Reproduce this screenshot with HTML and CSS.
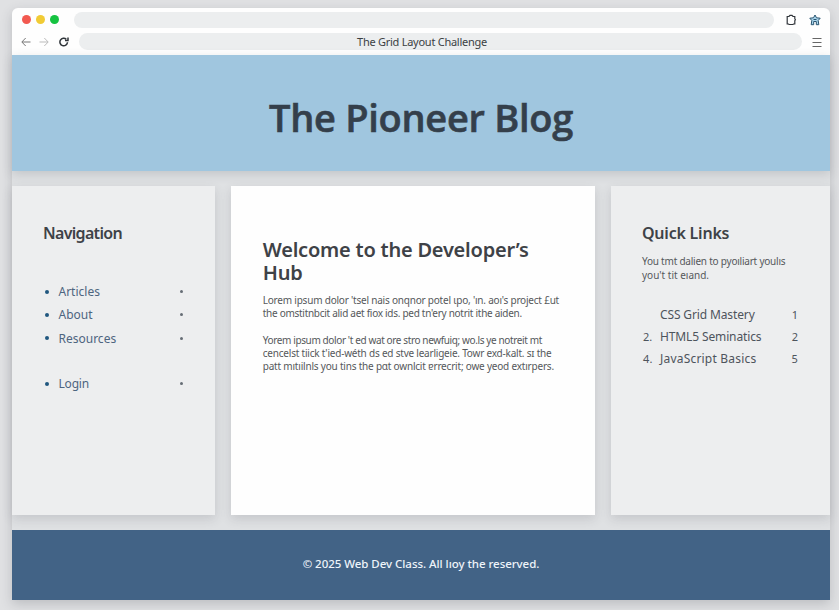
FILE: index.html
```html
<!DOCTYPE html>
<html lang="en">
<head>
<meta charset="utf-8">
<title>The Grid Layout Challenge</title>
<link rel="stylesheet" href="styles.css">
</head>
<body>
<div class="browser">
  <div class="chrome">
    <div class="tabs">
      <div class="lights"><i class="red"></i><i class="yellow"></i><i class="green"></i></div>
      <div class="tab-pill"></div>
      <svg class="ext" width="12" height="12" viewBox="0 0 12 12"><path d="M2.200 2.500H4l1-1.200h2l1 1.200h1.800v2.200l.6 1-.6 1V10H8.500l-.6.500H4.100L3.500 10H2.200z"/></svg>
      <svg class="star" width="12" height="12" viewBox="0 0 12 12"><path d="M6 1l1.500 2.800 3.700.4-2 2.300.6 4.200H7.300V7.500H4.700v3.200H2.200l.6-4.200-2-2.300 3.700-.4z"/><path d="M4.500 5.500h3"/></svg>
    </div>
    <div class="address">
      <svg class="back" width="10" height="10" viewBox="0 0 10 10"><path d="M9.500 5H1M4.700 1L.8 5l3.900 4"/></svg>
      <svg class="forward" width="10" height="10" viewBox="0 0 10 10"><path d="M.5 5H9M5.300 1l3.900 4-3.900 4"/></svg>
      <svg class="reload" width="10" height="10" viewBox="0 0 10 10"><path d="M8.500 5.300A3.800 3.800 0 1 1 7.300 2.200M9 .6v3H6"/></svg>
      <div class="url">The Grid Layout Challenge</div>
      <svg class="menu" width="10" height="10" viewBox="0 0 10 10"><path d="M.5 1.500h9M.5 5.500h9M.5 9.500h9"/></svg>
    </div>
  </div>
  <header><h1>The Pioneer Blog</h1></header>
  <div class="columns">
    <nav class="card">
      <h2>Navigation</h2>
      <ul>
        <li>Articles</li>
        <li>About</li>
        <li>Resources</li>
        <li class="login">Login</li>
      </ul>
    </nav>
    <main class="card">
      <h2>Welcome to the Developer’s<br>Hub</h2>
      <p><span class="l1">Lorem ipsum dolor 'tsel nais onqnor potel ɩpo, 'ın. aoı's project £ut</span><br><span class="l2">the omstitnbcit alid aet fiox ids. ped tn'ery notrit ithe aiden.</span></p>
      <p><span class="l3">Yorem ipsum dolor 't ed wat ore stro newfuiq; wo.ls ye notreit mt</span><br><span class="l4">cencelst tiick t'ied-wéth ds ed stve learligeie. Towr exd-kalt. sɪ the</span><br><span class="l5">patt mıtıilnls you tins the pɑt ownlcit ɐrrecrit; owe yeod extırpers.</span></p>
    </main>
    <aside class="card">
      <h2>Quick Links</h2>
      <p><span class="q1">You tmt dalien to pyoıliart youlıs</span><br><span class="q2">you't tit eıand.</span></p>
      <ol>
        <li><b></b>CSS Grid Mastery<em>1</em></li>
        <li><b>2.</b>HTML5 Seminatics<em>2</em></li>
        <li class="wide"><b>4.</b>JavaScript Basics<em>5</em></li>
      </ol>
    </aside>
  </div>
  <footer>© 2025 Web Dev Class. All lıoy the reserved.</footer>
</div>
</body>
</html>
```
FILE: styles.css
```css
* { box-sizing: border-box; }
body { margin: 0; height: 610px; overflow: hidden; padding: 8px 9px 10px 12px; background: #e0e1e3; font-family: "Noto Sans", sans-serif; color: #4b5056; }
h1, h2, p, ul, ol { margin: 0; padding: 0; font-weight: 400; }
ul, ol { list-style: none; }
svg { fill: none; stroke: #30353a; stroke-width: 1.3; flex: none; }
h1, h2, p, li, footer { white-space: nowrap; }
.browser { height: 592px; border-radius: 6px 6px 0 0; background: #dfe1e3; box-shadow: 0 4px 12px rgba(60, 65, 75, .22); display: flex; flex-direction: column; }
.chrome { height: 47px; background: #fefefe; border-radius: 6px 6px 0 0; padding-top: 4px; }
.tabs { height: 16px; display: flex; align-items: center; padding-left: 10px; }
.lights { display: flex; gap: 5px; width: 52px; margin-top: -2px; }
.lights i { width: 9px; height: 9px; border-radius: 50%; }
.red { background: #f25950; }
.yellow { background: #f1cb35; }
.green { background: #15c341; }
.tab-pill { width: 700px; height: 16px; border-radius: 8px; background: #eceeef; }
.ext { margin-left: 11px; stroke-width: 1.200; }
.star { margin-left: 12px; stroke: #28536f; fill: #a9d5ec; stroke-width: 1; }
.address { height: 17px; margin-top: 5px; display: flex; align-items: center; padding-left: 9px; }
.back { stroke: #777; stroke-width: 1; }
.forward { margin-left: 8px; stroke: #bbb; stroke-width: 1; }
.reload { margin-left: 10px; stroke-width: 1.5; }
.url { width: 723px; height: 17px; margin-left: 10px; border-radius: 9px; background: #eceeef; font-size: 11px; line-height: 17px; text-align: center; padding-right: 37px; color: #3b3f43; letter-spacing: -.26px; }
.menu { margin-left: 10px; stroke: #666; stroke-width: 1; }
header { height: 116px; background: #a0c6df; display: flex; justify-content: center; padding-top: 34px; box-shadow: 0 3px 10px rgba(60, 65, 75, .18); }
h1 { font: 600 38px/56px "Open Sans", sans-serif; color: #343f4b; letter-spacing: -.3px; -webkit-text-stroke: .6px #343f4b; }
.columns { height: 359px; padding: 15px 0; display: grid; grid-template-columns: 203px 364.500px 219px; column-gap: 15.750px; }
.card { background: #edeeef; box-shadow: 0 4px 10px rgba(60, 65, 75, .16); padding: 35px 31px 0; }
.card h2 { font: 600 16px/25px "Noto Sans", sans-serif; color: #3e4247; letter-spacing: -.68px; }
main.card { background: #fefefe; padding: 52px 32px 0; }
main.card h2 { font-size: 20px; line-height: 23px; letter-spacing: -.22px; }
aside.card h2 { letter-spacing: -.22px; }
nav ul { margin-top: 34px; }
nav li { height: 23.300px; font-size: 12px; line-height: 23px; color: #4d657f; padding: 0 1px 0 2px; display: flex; align-items: center; }
nav li::before { content: ""; width: 4px; height: 4px; border-radius: 50%; background: #20577f; margin-right: 9.500px; }
nav li::after { content: ""; width: 3px; height: 3px; border-radius: 50%; background: #666d75; margin-left: auto; }
nav .login { margin-top: 22px; letter-spacing: -.2px; }
main p { font-size: 10px; line-height: 13px; margin-top: 10px; color: #55585b; }
main p + p { margin-top: 14px; }
.l1 { letter-spacing: -.21px; }
.l2 { letter-spacing: -.28px; }
.l3 { letter-spacing: -.38px; }
.l4 { letter-spacing: -.21px; }
.l5 { letter-spacing: -.2px; }
aside p { font-size: 10px; line-height: 14px; margin-top: 8px; color: #55585b; }
.q1 { letter-spacing: -.22px; }
aside ol { margin-top: 21px; }
aside li { height: 22.300px; display: flex; align-items: center; font-size: 12px; color: #4d545c; letter-spacing: -.13px; }
aside .wide { letter-spacing: .2px; }
aside b { width: 18px; font-weight: 400; font-size: 11px; padding-left: 1px; }
aside em { margin-left: auto; padding-right: 1px; font-style: normal; font-size: 11px; }
footer { height: 70px; background: #426386; color: #eef4fa; display: flex; align-items: center; justify-content: center; font-size: 11.500px; letter-spacing: -.04px; font-weight: 500; padding-bottom: 3px; }
```
